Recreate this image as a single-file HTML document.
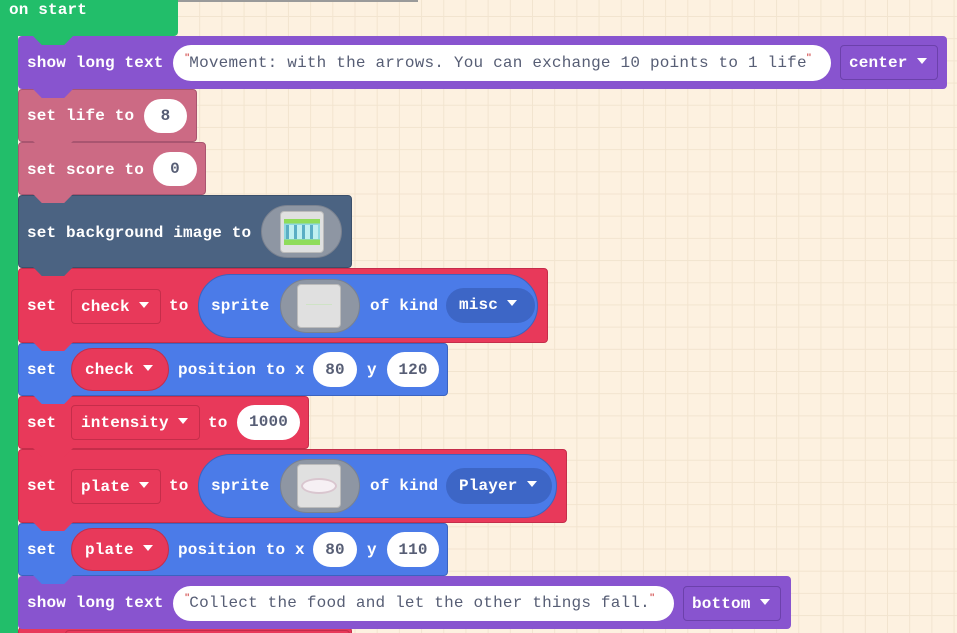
<!DOCTYPE html>
<html><head><meta charset="utf-8"><style>
*{margin:0;padding:0;box-sizing:border-box}
html,body{width:957px;height:633px;overflow:hidden}
body{position:relative;
background-color:#fdf1e0;
background-image:linear-gradient(90deg,#f2e4cf 1px,transparent 1px),linear-gradient(#f2e4cf 1px,transparent 1px);
background-size:22.2px 22.2px;background-position:-0.5px 16px,0 16px;
font-family:"Liberation Mono",monospace;font-weight:bold;font-size:16px;color:#fff;letter-spacing:0.15px}
.a{position:absolute}
.b{position:absolute;border-radius:4px}
.t{position:absolute;white-space:pre;line-height:20px}
.pill{position:absolute;background:#fff;border-radius:18px;color:#575e75;text-align:center;line-height:20px}
.dd{position:absolute;border-radius:4px;line-height:20px;padding-left:14px;white-space:nowrap}
.tab{position:absolute;width:40px;height:9px;clip-path:polygon(0 0,100% 0,78% 100%,22% 100%)}
.str{position:absolute;background:#fff;border-radius:18px;color:#575e75;font-weight:normal;line-height:20px;white-space:pre;letter-spacing:0.2px}
.q{color:#c33;font-size:12px;font-family:"Liberation Sans",sans-serif;vertical-align:top;position:relative;top:-5px;letter-spacing:0}
.oval{position:absolute;background:#8e96a3;border-radius:28px;border:1px solid #7a8290}
.img{position:absolute;background:#e0e0e0;border-radius:4px;border:1px solid #bbb}
.tri{display:inline-block;width:0;height:0;border-left:5px solid transparent;border-right:5px solid transparent;border-top:6px solid #fff;margin-left:9px;vertical-align:middle;position:relative;top:-2px}
</style></head><body>
<div class="a" style="left:178px;top:0;width:240px;height:2px;background:#9a9a9a"></div>
<div class="b" style="left:0;top:-5px;width:178px;height:41px;background:#22be6a;border-radius:0 0 4px 0"></div>
<div class="a" style="left:0;top:30px;width:18px;height:603px;background:#22be6a"></div>
<div class="t" style="left:9px;top:0px">on start</div>

<div class="b" style="left:18px;top:36px;width:929px;height:53px;background:#8854cf"></div>
<div class="tab" style="left:33px;top:36px;background:#22be6a"></div>
<div class="t" style="left:27px;top:53px">show long text</div>
<div class="str" style="left:173px;top:45px;width:658px;height:36px;padding:8px 0 0 12px"><span class="q">"</span>Movement: with the arrows. You can exchange 10 points to 1 life<span class="q">"</span></div>
<div class="dd" style="left:840px;top:45px;width:98px;height:35px;background:#8854cf;border:1px solid #6c41ab;padding-top:7px;padding-left:8px">center<span class="tri"></span></div>

<div class="b" style="left:18px;top:89px;width:179px;height:53px;background:#cc6a84;border:1px solid #a95570"></div>
<div class="tab" style="left:33px;top:89px;background:#8854cf"></div>
<div class="t" style="left:27px;top:106px">set life to</div>
<div class="pill" style="left:144px;top:99px;width:43px;height:34px;padding-top:7px">8</div>

<div class="b" style="left:18px;top:142px;width:188px;height:53px;background:#cc6a84;border:1px solid #a95570"></div>
<div class="tab" style="left:33px;top:141px;background:#cc6a84"></div>
<div class="t" style="left:27px;top:160px">set score to</div>
<div class="pill" style="left:153px;top:152px;width:44px;height:34px;padding-top:7px">0</div>

<div class="b" style="left:18px;top:195px;width:334px;height:73px;background:#4b6382;border:1px solid #3b506b"></div>
<div class="tab" style="left:33px;top:194px;background:#cc6a84"></div>
<div class="t" style="left:27px;top:223px">set background image to</div>
<div class="oval" style="left:261px;top:205px;width:81px;height:53px"></div>
<div class="img" style="left:280px;top:211px;width:44px;height:42px"></div>
<div class="a" style="left:284px;top:219px;width:36px;height:26px;background:linear-gradient(#8fdc5a 0 18%,#8fd8e0 18% 78%,#8fdc5a 78%)"></div>
<div class="a" style="left:286px;top:225px;width:32px;height:14px;background:repeating-linear-gradient(90deg,#5aaec4 0 3px,#c0f0f0 3px 8px)"></div>

<div class="b" style="left:18px;top:268px;width:530px;height:75px;background:#e8395a;border:1px solid #c52d4a"></div>
<div class="tab" style="left:33px;top:267px;background:#4b6382"></div>
<div class="t" style="left:27px;top:296px">set</div>
<div class="dd" style="left:71px;top:289px;width:90px;height:35px;background:#e8395a;border:1px solid #c52d4a;padding-top:7px;padding-left:9px">check<span class="tri"></span></div>
<div class="t" style="left:169px;top:296px">to</div>
<div class="a" style="left:198px;top:274px;width:340px;height:64px;background:#4b7be8;border:1px solid #3b63c0;border-radius:32px"></div>
<div class="t" style="left:211px;top:296px">sprite</div>
<div class="oval" style="left:280px;top:279px;width:80px;height:54px"></div>
<div class="img" style="left:297px;top:284px;width:44px;height:44px"></div>
<div class="a" style="left:306px;top:304px;width:26px;height:1px;background:#cfe3c6"></div>
<div class="t" style="left:370px;top:296px">of kind</div>
<div class="dd" style="left:446px;top:288px;width:89px;height:35px;background:#3d66c6;border-radius:18px;padding-top:7px;padding-left:13px">misc<span class="tri"></span></div>

<div class="b" style="left:18px;top:343px;width:430px;height:53px;background:#4b7be8;border:1px solid #3b63c0"></div>
<div class="tab" style="left:33px;top:342px;background:#e8395a"></div>
<div class="t" style="left:27px;top:360px">set</div>
<div class="dd" style="left:71px;top:348px;width:98px;height:43px;background:#e8395a;border:1px solid #c52d4a;border-radius:22px;padding-top:11px;padding-left:13px">check<span class="tri"></span></div>
<div class="t" style="left:178px;top:360px">position to x</div>
<div class="pill" style="left:313px;top:352px;width:44px;height:35px;padding-top:8px">80</div>
<div class="t" style="left:367px;top:360px">y</div>
<div class="pill" style="left:387px;top:352px;width:52px;height:35px;padding-top:8px">120</div>

<div class="b" style="left:18px;top:396px;width:291px;height:53px;background:#e8395a;border:1px solid #c52d4a"></div>
<div class="tab" style="left:33px;top:395px;background:#4b7be8"></div>
<div class="t" style="left:27px;top:413px">set</div>
<div class="dd" style="left:71px;top:405px;width:129px;height:35px;background:#e8395a;border:1px solid #c52d4a;padding-top:7px;padding-left:9px">intensity<span class="tri"></span></div>
<div class="t" style="left:208px;top:413px">to</div>
<div class="pill" style="left:237px;top:405px;width:63px;height:35px;padding-top:7px">1000</div>

<div class="b" style="left:18px;top:449px;width:549px;height:74px;background:#e8395a;border:1px solid #c52d4a"></div>
<div class="tab" style="left:33px;top:448px;background:#e8395a"></div>
<div class="t" style="left:27px;top:476px">set</div>
<div class="dd" style="left:71px;top:469px;width:90px;height:35px;background:#e8395a;border:1px solid #c52d4a;padding-top:7px;padding-left:9px">plate<span class="tri"></span></div>
<div class="t" style="left:169px;top:476px">to</div>
<div class="a" style="left:198px;top:454px;width:359px;height:64px;background:#4b7be8;border:1px solid #3b63c0;border-radius:32px"></div>
<div class="t" style="left:211px;top:476px">sprite</div>
<div class="oval" style="left:280px;top:459px;width:80px;height:54px"></div>
<div class="img" style="left:297px;top:464px;width:44px;height:44px"></div>
<div class="a" style="left:301px;top:478px;width:36px;height:16px;border-radius:50%;background:#f6f0f4;border:2px solid #d9c6cf"></div>
<div class="t" style="left:370px;top:476px">of kind</div>
<div class="dd" style="left:446px;top:468px;width:106px;height:36px;background:#3d66c6;border-radius:18px;padding-top:8px;padding-left:13px">Player<span class="tri"></span></div>

<div class="b" style="left:18px;top:523px;width:430px;height:53px;background:#4b7be8;border:1px solid #3b63c0"></div>
<div class="tab" style="left:33px;top:522px;background:#e8395a"></div>
<div class="t" style="left:27px;top:540px">set</div>
<div class="dd" style="left:71px;top:528px;width:98px;height:43px;background:#e8395a;border:1px solid #c52d4a;border-radius:22px;padding-top:11px;padding-left:13px">plate<span class="tri"></span></div>
<div class="t" style="left:178px;top:540px">position to x</div>
<div class="pill" style="left:313px;top:532px;width:44px;height:35px;padding-top:8px">80</div>
<div class="t" style="left:367px;top:540px">y</div>
<div class="pill" style="left:387px;top:532px;width:52px;height:35px;padding-top:8px">110</div>

<div class="b" style="left:18px;top:627px;width:334px;height:20px;background:#e8395a;border:1px solid #c52d4a"></div>
<div class="b" style="left:65px;top:630px;width:285px;height:20px;background:#e8395a;border:1px solid #c52d4a"></div>

<div class="b" style="left:18px;top:576px;width:773px;height:53px;background:#8854cf"></div>
<div class="tab" style="left:33px;top:575px;background:#4b7be8"></div>
<div class="t" style="left:27px;top:593px">show long text</div>
<div class="str" style="left:173px;top:586px;width:501px;height:35px;padding:7px 0 0 12px"><span class="q">"</span>Collect the food and let the other things fall.<span class="q">"</span></div>
<div class="dd" style="left:683px;top:586px;width:98px;height:35px;background:#8854cf;border:1px solid #6c41ab;padding-top:7px;padding-left:8px">bottom<span class="tri"></span></div>
</body></html>
